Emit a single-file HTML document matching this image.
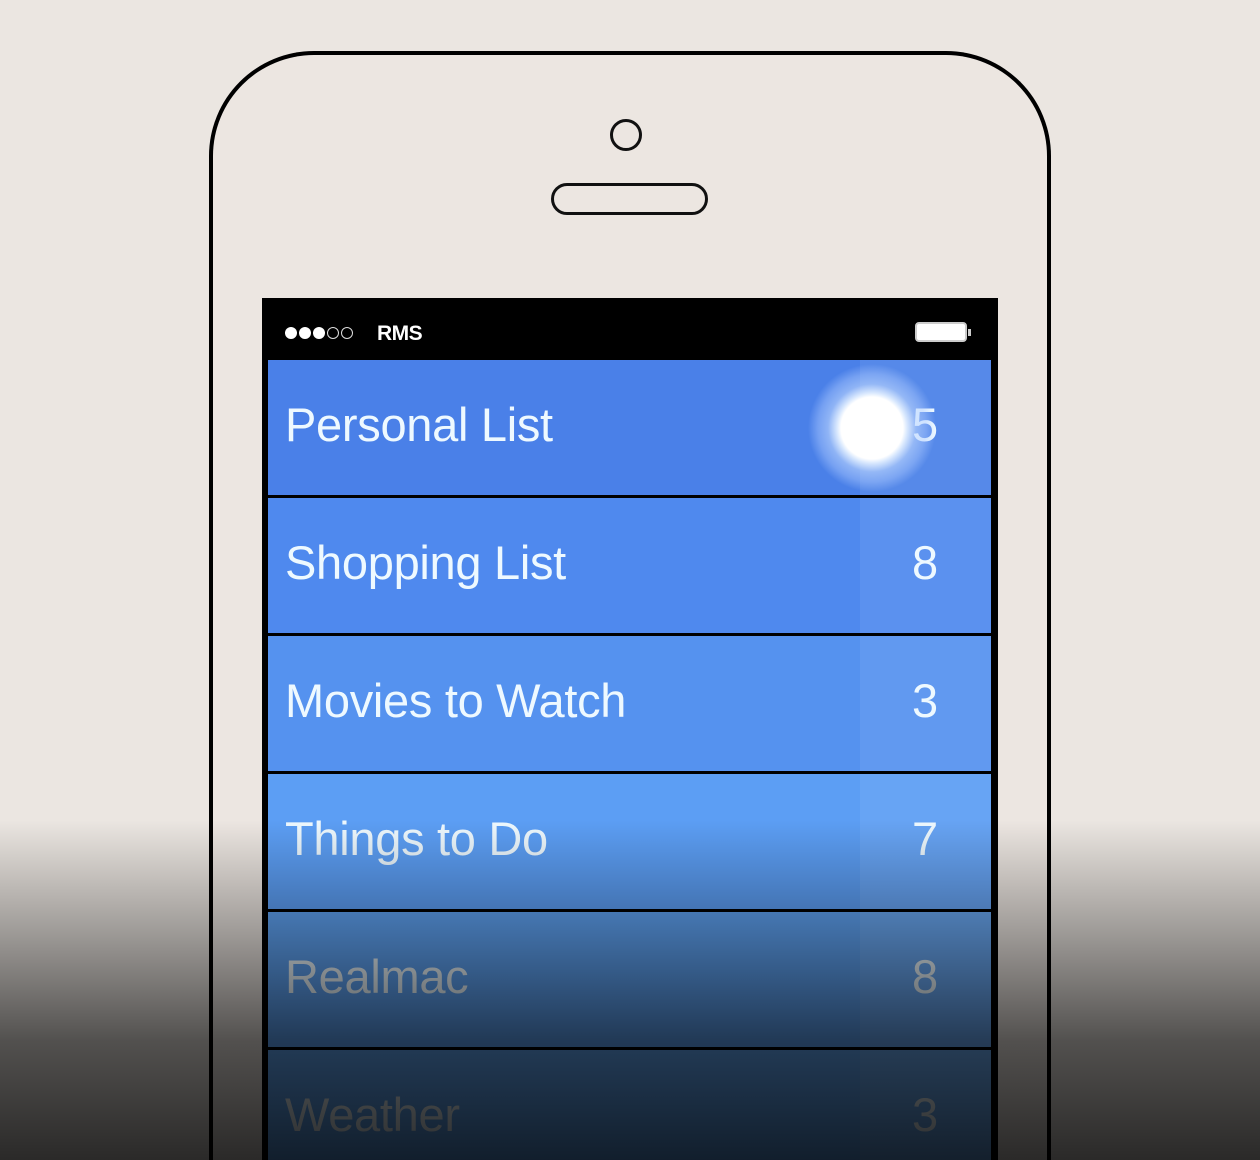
<!DOCTYPE html>
<html><head><meta charset="utf-8"><style>
html,body{margin:0;padding:0;width:1260px;height:1160px;overflow:hidden}
body{background:#ebe6e1;font-family:"Liberation Sans",Arial,sans-serif;position:relative}
.wrap{position:absolute;left:0;top:0;width:1260px;height:1160px;overflow:hidden}
.phone{position:absolute;left:209px;top:51px;width:842px;height:1109px;border:4px solid #000;border-bottom:none;border-radius:105px 105px 0 0;background:#ece6e1;box-sizing:border-box}
.cam{position:absolute;left:610px;top:119px;width:32px;height:32px;border:3px solid #111;border-radius:50%;box-sizing:border-box}
.spk{position:absolute;left:551px;top:183px;width:157px;height:32px;border:3px solid #111;border-radius:16px;box-sizing:border-box}
.screen{position:absolute;left:262px;top:298px;width:736px;height:862px;background:#000;overflow:hidden}
.status{position:absolute;left:0;top:0;width:736px;height:60px;color:#fff}
.d{position:absolute;top:29px;width:12px;height:12px;border-radius:50%;box-sizing:border-box}
.f{background:#fff}.o{border:1.5px solid #ddd}
.rms{position:absolute;left:115px;top:24px;font-size:21px;font-weight:bold;letter-spacing:-0.5px}
.bat{position:absolute;left:653px;top:24px;width:52px;height:20px;border:2px solid #ccc;border-radius:4px;background:#fff;box-sizing:border-box}
.bat:after{content:"";position:absolute;right:-6px;top:5px;width:3px;height:7px;background:#ccc}
.row{position:absolute;left:6px;width:723px;height:135px;color:#eef9ff;font-size:47px;overflow:hidden}
.row .t{position:absolute;left:17px;top:37px;letter-spacing:-0.3px}
.row .n{position:absolute;left:644px;top:37px}
.row .col{position:absolute;left:592px;top:0;width:131px;height:100%;background:rgba(255,255,255,0.07)}
.touch{position:absolute;left:808px;top:364px;width:128px;height:128px;border-radius:50%;background:radial-gradient(circle,#fff 0,#fff 31px,rgba(225,238,255,.95) 35px,rgba(190,215,255,.6) 44px,rgba(170,200,255,.45) 54px,rgba(160,195,255,0) 64px)}
.fade{position:absolute;left:0;top:820px;width:1260px;height:340px;background:linear-gradient(to bottom,rgba(0,0,0,0),rgba(0,0,0,.35) 35%,rgba(0,0,0,.65) 65%,rgba(0,0,0,.82))}
</style></head><body>
<div class="wrap">
<div class="phone"></div>
<div class="cam"></div>
<div class="spk"></div>
<div class="screen">
 <div class="status">
  <div class="d f" style="left:23px"></div><div class="d f" style="left:37px"></div><div class="d f" style="left:51px"></div><div class="d o" style="left:65px"></div><div class="d o" style="left:79px"></div>
  <span class="rms">RMS</span><div class="bat"></div></div>
 <div class="row" style="top:62px;background:#4a80e8"><div class="col"></div><span class="t">Personal List</span><span class="n">5</span></div>
 <div class="row" style="top:200px;background:#4f89ee"><div class="col"></div><span class="t">Shopping List</span><span class="n">8</span></div>
 <div class="row" style="top:338px;background:#5592ef"><div class="col"></div><span class="t">Movies to Watch</span><span class="n">3</span></div>
 <div class="row" style="top:476px;background:#5c9ef4"><div class="col"></div><span class="t">Things to Do</span><span class="n">7</span></div>
 <div class="row" style="top:614px;background:#5fa3f4"><div class="col"></div><span class="t">Realmac</span><span class="n">8</span></div>
 <div class="row" style="top:752px;height:110px;background:#62a8f6"><div class="col"></div><span class="t">Weather</span><span class="n">3</span></div>
</div>
<div class="touch"></div>
<div class="fade"></div>
</div>
</body></html>
